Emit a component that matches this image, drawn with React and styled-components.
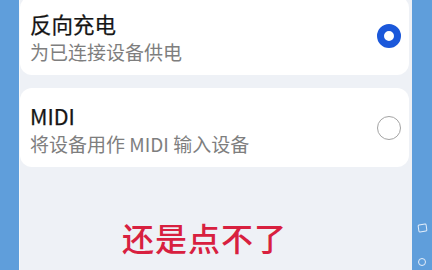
import styled, { createGlobalStyle } from 'styled-components';

const GlobalStyle = createGlobalStyle`
    html, body {
        margin: 0;
        padding: 0;
        background: #5f9edb;
    }
    body {
        font-family: "Noto Sans CJK SC", "Noto Sans", sans-serif;
    }
`;

const options = [
    { id: 'reverse', title: '反向充电', desc: '为已连接设备供电', checked: true, first: true },
    { id: 'midi', title: 'MIDI', desc: '将设备用作 MIDI 输入设备', checked: false },
];

const App = () => {
    return (
        <>
            <GlobalStyle />
            <Frame>
                <SideBar />
                <Screen>
                    {options.map((o) => (
                        <Card key={o.id} $first={o.first}>
                            <Texts>
                                <Title>{o.title}</Title>
                                <Desc>{o.desc}</Desc>
                            </Texts>
                            <Radio $checked={o.checked} />
                        </Card>
                    ))}
                    <Caption>还是点不了</Caption>
                </Screen>
                <NavBar>
                    <NavSquare />
                    <NavCircle />
                </NavBar>
            </Frame>
        </>
    );
};

export default App;

const Frame = styled.div`
    display: flex;
    width: 432px;
    height: 270px;
    overflow: hidden;
    background: #5f9edb;
`;

const SideBar = styled.div`
    width: 19px;
    flex: none;
    background: #5f9edb;
`;

const Screen = styled.div`
    width: 393px;
    flex: none;
    display: flex;
    flex-direction: column;
    gap: 13px;
    padding: 0 3px 0 1px;
    box-sizing: border-box;
    background: #eef1f6;
    border-left: 1px solid #f6f9fc;
`;

const Card = styled.div`
    display: flex;
    align-items: center;
    justify-content: space-between;
    height: 79px;
    flex: none;
    margin-top: ${(p) => (p.$first ? '-4px' : '0')};
    margin-left: -1px;
    padding: 0 8px 0 10px;
    box-sizing: border-box;
    background: #fff;
    border-radius: 12px;
`;

const Texts = styled.div`
    display: flex;
    flex-direction: column;
    padding-top: 4px;
`;

const Title = styled.div`
    font-size: 21.5px;
    line-height: 28px;
    font-weight: 400;
    color: #151515;
    -webkit-text-stroke: 0.25px #151515;
`;

const Desc = styled.div`
    font-size: 19px;
    line-height: 28px;
    color: #7e7e7e;
`;

const Radio = styled.span`
    width: 24px;
    height: 24px;
    flex: none;
    border-radius: 50%;
    box-sizing: border-box;
    background: #fff;
    border: ${(p) => (p.$checked ? '7.5px solid #1b58da' : '1.5px solid #a3a3a3')};
`;

const Caption = styled.div`
    margin-top: 37px;
    padding-left: 101px;
    font-size: 32px;
    line-height: 40px;
    font-weight: 500;
    color: #d8203f;
    letter-spacing: 1px;
`;

const NavBar = styled.div`
    flex: 1;
    display: flex;
    flex-direction: column;
    align-items: center;
    justify-content: flex-end;
    gap: 26px;
    padding-bottom: 4px;
    background: #5f9edb;
`;

const NavSquare = styled.span`
    width: 7px;
    height: 6px;
    border: 1.5px solid #e4eefa;
    border-radius: 1.5px;
    transform: rotate(-8deg);
`;

const NavCircle = styled.span`
    width: 6px;
    height: 6px;
    border: 1.5px solid #e4eefa;
    border-radius: 50%;
`;
